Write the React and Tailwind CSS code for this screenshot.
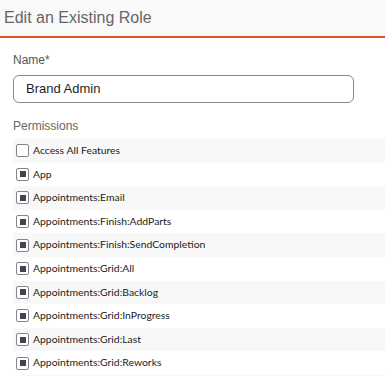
import React from "react";

const items = [
  ["Access All Features", false],
  ["App", true],
  ["Appointments:Email", true],
  ["Appointments:Finish:AddParts", true],
  ["Appointments:Finish:SendCompletion", true],
  ["Appointments:Grid:All", true],
  ["Appointments:Grid:Backlog", true],
  ["Appointments:Grid:InProgress", true],
  ["Appointments:Grid:Last", true],
  ["Appointments:Grid:Reworks", true],
  ["", null],
];

function Box({ checked }) {
  return (
    <span className="w-[13px] h-[13px] shrink-0 border border-[#858585] rounded-[2px] bg-white flex items-center justify-center">
      {checked && <span className="w-[6px] h-[6px] bg-[#3d4655]" />}
    </span>
  );
}

export default function App() {
  return (
    <div className="w-[385px] h-[376px] overflow-hidden bg-white" style={{ fontFamily: "'Liberation Sans', Arial, sans-serif" }}>
      <div className="h-[38px] bg-[#f9f9f9] border-b-[2px] border-[#e4532b] flex items-center pl-[4px]">
        <span className="text-[16px] text-[#666]">Edit an Existing Role</span>
      </div>
      <div className="pl-[13px]">
        <div className="pt-[14px] text-[12px] text-[#555] leading-[16px]">Name*</div>
        <div className="mt-[7px] w-[341px] h-[28px] border border-[#8a8a8a] rounded-[6px] flex items-center pl-[12px] text-[13px] text-[#1e1e1e]">
          Brand Admin
        </div>
        <div className="mt-[15px] text-[12px] text-[#666] leading-[16px]">Permissions</div>
        <div className="mt-[5px]" style={{ fontFamily: "Lato, 'Noto Sans', sans-serif" }}>
          {items.map(([label, checked], i) => (
            <div
              key={i}
              className={`h-[23.6px] flex items-center gap-[4px] pl-[3px] text-[10.4px] text-[#222] ${i % 2 === 0 ? "bg-[#f8f8f8]" : "bg-white"}`}
            >
              {checked !== null && <Box checked={checked} />}
              {label && <span>{label}</span>}
            </div>
          ))}
        </div>
      </div>
    </div>
  );
}
